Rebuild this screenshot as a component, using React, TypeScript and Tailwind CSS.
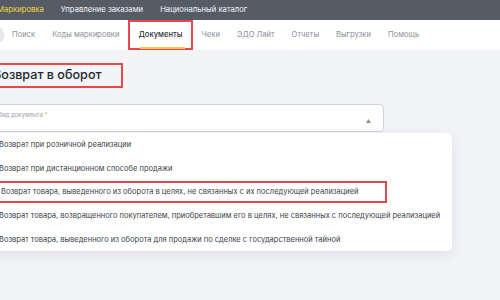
import React from 'react';

const topLinks = ["Маркировка", "Управление заказами", "Национальный каталог"];

const tabs = ["Поиск", "Коды маркировки", "Документы", "Чеки", "ЭДО Лайт", "Отчеты", "Выгрузки", "Помощь"];

const options = [
  "Возврат при розничной реализации",
  "Возврат при дистанционном способе продажи",
  "Возврат товара, выведенного из оборота в целях, не связанных с их последующей реализацией",
  "Возврат товара, возвращенного покупателем, приобретавшим его в целях, не связанных с последующей реализацией",
  "Возврат товара, выведенного из оборота для продажи по сделке с государственной тайной",
];

export default function App() {
  return (
    <div className="relative w-[500px] h-[300px] overflow-hidden bg-[#f3f4f8] font-['Inter',sans-serif]">
      {/* Top bar */}
      <header className="h-[20px] bg-[#565c66] flex items-center gap-[17px] -ml-[3px] text-[7.7px]">
        {topLinks.map((l, i) => (
          <span key={l} className={i === 0 ? "text-[#f2d43c]" : "text-[#f4f5f7]"}>
            {l}
          </span>
        ))}
      </header>

      {/* Tabs */}
      <nav className="h-[30px] bg-white flex items-center text-[7.6px] text-[#8b9099]">
        <svg width="5" height="14" viewBox="0 0 5 14" className="mr-[7px]">
          <path d="M0 0 L2 0 L5 7 L2 14 L0 14 Z" fill="#e6e8ec" />
        </svg>
        <div className="flex items-center gap-[17px] h-full">
          {tabs.map((t) => (
            t === "Документы" ? (
              <div key={t} className="relative h-full flex items-center -mx-[8px] px-[8px] border-2 border-[#e5484d]">
                <span className="text-[#2d3139] font-medium">{t}</span>
                <div className="absolute left-[10px] right-[6px] bottom-[-1px] h-[2px] bg-[#f2c94c]" />
              </div>
            ) : (
              <span key={t}>{t}</span>
            )
          ))}
        </div>
      </nav>

      {/* Title */}
      <div className="mt-[13px] -ml-[20px] w-[143px] h-[25px] border-2 border-[#e5484d] flex items-center pl-[11px]">
        <h1 className="text-[12.6px] font-medium text-[#23272e]">Возврат в оборот</h1>
      </div>

      {/* Select */}
      <div className="mt-[16px] -ml-[20px] w-[404px] h-[28px] bg-white border border-[#cdd5e3] rounded-[4px] flex items-start justify-between pl-[17px] pr-[12px] pt-[5px]">
        <span className="text-[6px] text-[#9aa0aa]">
          Вид документа <span className="text-[#f0a33a]">*</span>
        </span>
        <svg width="5" height="4" viewBox="0 0 5 4" className="mt-[9px]">
          <path d="M0 4 L2.5 0 L5 4 Z" fill="#8b9099" />
        </svg>
      </div>

      {/* Dropdown */}
      <div className="absolute left-[-20px] top-[133px] w-[472px] bg-white rounded-[5px] shadow-[0_4px_14px_rgba(30,40,60,0.10)] text-[7.5px] text-[#3a3f47]">
        {options.map((o, i) => (
          <div key={o} className="h-[23.6px] flex items-center pl-[19px]">
            {i === 2 ? (
              <div className="-ml-[19px] pl-[19px] w-[407px] h-[22px] border-2 border-[#e5484d] flex items-center">
                {o}
              </div>
            ) : (
              o
            )}
          </div>
        ))}
      </div>
    </div>
  );
}
